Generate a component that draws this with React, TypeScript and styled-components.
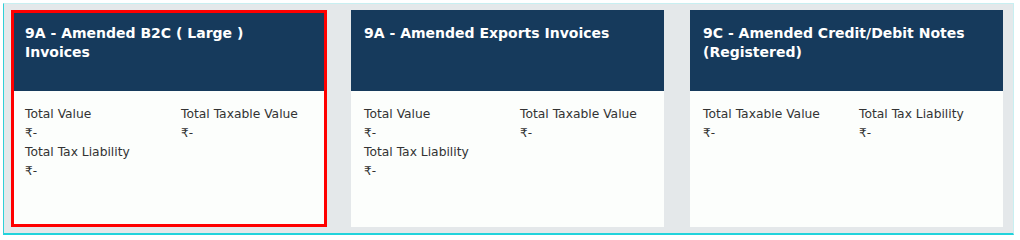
import React from 'react';
import { styled, createGlobalStyle } from 'styled-components';

const GlobalStyle = createGlobalStyle`
  html, body {
    margin: 0;
    padding: 0;
    background: #ffffff;
  }
  body {
    font-family: "DejaVu Sans", Verdana, sans-serif;
  }
`;

const Panel = styled.div`
  margin: 3px 6px 0 3px;
  height: 232px;
  box-sizing: border-box;
  background: #e4e8ea;
  border-left: 1px solid #2fd0d8;
  border-top: 1px solid #c8eff1;
  border-right: 1px solid #c8eff1;
  border-bottom: 2px solid #22d3dc;
  padding: 6px 0 0 7px;
  display: grid;
  grid-template-columns: 316px 313px 315px;
  column-gap: 24px;
  align-items: start;
`;

const Card = styled.div<{ $active?: boolean }>`
  box-sizing: border-box;
  height: 217px;
  background: #fcfefc;
  display: flex;
  flex-direction: column;
  border: ${(p) => (p.$active ? '3px solid #ff0000' : 'none')};
  &:nth-child(3) {
    margin-left: 2px;
  }
`;

const Header = styled.div<{ $active?: boolean }>`
  background: #163a5c;
  color: #ffffff;
  height: ${(p) => (p.$active ? '78px' : '81px')};
  box-sizing: border-box;
  padding: ${(p) => (p.$active ? '11px 11px 0' : '14px 13px 0')};
  font-size: 14px;
  font-weight: bold;
  line-height: 19px;
`;

const Body = styled.div<{ $active?: boolean }>`
  padding: ${(p) => (p.$active ? '15px 11px 0' : '15px 13px 0')};
  display: grid;
  grid-template-columns: 156px 1fr;
  color: #333333;
`;

const Field = styled.div`
  display: flex;
  flex-direction: column;
`;

const Label = styled.div`
  font-size: 12.3px;
  line-height: 16px;
`;

const Value = styled.div`
  font-size: 12px;
  line-height: 23px;
  height: 22px;
`;

type Item = { label: string; value: string };

const cards: { title: string; items: Item[]; active?: boolean }[] = [
  {
    title: '9A - Amended B2C ( Large ) Invoices',
    active: true,
    items: [
      { label: 'Total Value', value: '₹-' },
      { label: 'Total Taxable Value', value: '₹-' },
      { label: 'Total Tax Liability', value: '₹-' },
    ],
  },
  {
    title: '9A - Amended Exports Invoices',
    items: [
      { label: 'Total Value', value: '₹-' },
      { label: 'Total Taxable Value', value: '₹-' },
      { label: 'Total Tax Liability', value: '₹-' },
    ],
  },
  {
    title: '9C - Amended Credit/Debit Notes (Registered)',
    items: [
      { label: 'Total Taxable Value', value: '₹-' },
      { label: 'Total Tax Liability', value: '₹-' },
    ],
  },
];

const App = () => {
  return (
    <>
      <GlobalStyle />
      <Panel>
        {cards.map((c) => (
          <Card key={c.title} $active={c.active}>
            <Header $active={c.active}>{c.title}</Header>
            <Body $active={c.active}>
              {c.items.map((it) => (
                <Field key={it.label}>
                  <Label>{it.label}</Label>
                  <Value>{it.value}</Value>
                </Field>
              ))}
            </Body>
          </Card>
        ))}
      </Panel>
    </>
  );
};

export default App;
